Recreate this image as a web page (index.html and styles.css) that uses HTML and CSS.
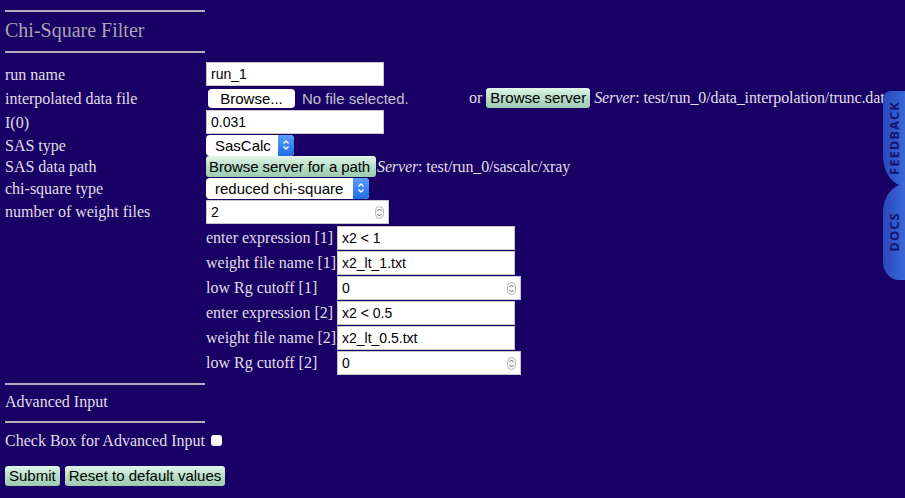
FILE: index.html
```html
<!DOCTYPE html>
<html>
<head>
<meta charset="utf-8">
<link rel="stylesheet" href="styles.css">
</head>
<body>
<div class="page">
  <div class="rule first"></div>
  <h1 class="title">Chi-Square Filter</h1>
  <div class="rule"></div>

  <div class="form">
    <div class="label r24">run name</div>
    <div class="field r24"><div class="text w177">run_1</div></div>

    <div class="label r24">interpolated data file</div>
    <div class="field r24 fileline">
      <span class="filebtn">Browse...</span>
      <span class="nofile">No file selected.</span>
      <span class="or">or</span>
      <span class="gbtn">Browse server</span>
      <span class="server"><i>Server</i>: test/run_0/data_interpolation/trunc.dat</span>
    </div>

    <div class="label r24">I(0)</div>
    <div class="field r24"><div class="text w177">0.031</div></div>

    <div class="label r22">SAS type</div>
    <div class="field r22">
      <div class="select w88"><span class="sv">SasCalc</span><span class="arrows"><svg width="8" height="12" viewBox="0 0 8 12"><path d="M1.5 4.5 L4 2 L6.5 4.5 M1.5 7.5 L4 10 L6.5 7.5" fill="none" stroke="#fff" stroke-width="1.3"/></svg></span></div>
    </div>

    <div class="label r21">SAS data path</div>
    <div class="field r21">
      <span class="gbtn path">Browse server for a path</span><span class="server"><i>Server</i>: test/run_0/sascalc/xray</span>
    </div>

    <div class="label r22">chi-square type</div>
    <div class="field r22">
      <div class="select w163"><span class="sv">reduced chi-square</span><span class="arrows"><svg width="8" height="12" viewBox="0 0 8 12"><path d="M1.5 4.5 L4 2 L6.5 4.5 M1.5 7.5 L4 10 L6.5 7.5" fill="none" stroke="#fff" stroke-width="1.3"/></svg></span></div>
    </div>

    <div class="label r25">number of weight files</div>
    <div class="field r25"><div class="text number w183">2<span class="spin"><svg width="9" height="13" viewBox="0 0 9 13"><rect x="0.5" y="0.5" width="8" height="12" rx="4" fill="#f4f4f4" stroke="#bbb"/><path d="M2.5 5 L4.5 3 L6.5 5 M2.5 8 L4.5 10 L6.5 8" fill="none" stroke="#666" stroke-width="0.9"/></svg></span></div></div>

    <div class="sub">
      <div class="slabel">enter expression [1]</div>
      <div class="sfield"><div class="text w177">x2 &lt; 1</div></div>
      <div class="slabel">weight file name [1]</div>
      <div class="sfield"><div class="text w177">x2_lt_1.txt</div></div>
      <div class="slabel">low Rg cutoff [1]</div>
      <div class="sfield"><div class="text number w184">0<span class="spin"><svg width="9" height="13" viewBox="0 0 9 13"><rect x="0.5" y="0.5" width="8" height="12" rx="4" fill="#f4f4f4" stroke="#bbb"/><path d="M2.5 5 L4.5 3 L6.5 5 M2.5 8 L4.5 10 L6.5 8" fill="none" stroke="#666" stroke-width="0.9"/></svg></span></div></div>
      <div class="slabel">enter expression [2]</div>
      <div class="sfield"><div class="text w177">x2 &lt; 0.5</div></div>
      <div class="slabel">weight file name [2]</div>
      <div class="sfield"><div class="text w177">x2_lt_0.5.txt</div></div>
      <div class="slabel">low Rg cutoff [2]</div>
      <div class="sfield"><div class="text number w184">0<span class="spin"><svg width="9" height="13" viewBox="0 0 9 13"><rect x="0.5" y="0.5" width="8" height="12" rx="4" fill="#f4f4f4" stroke="#bbb"/><path d="M2.5 5 L4.5 3 L6.5 5 M2.5 8 L4.5 10 L6.5 8" fill="none" stroke="#666" stroke-width="0.9"/></svg></span></div></div>
    </div>
  </div>

  <div class="rule adv"></div>
  <div class="advtitle">Advanced Input</div>
  <div class="rule"></div>
  <div class="checkline">Check Box for Advanced Input <span class="checkbox"></span></div>

  <div class="buttons">
    <span class="gbtn">Submit</span>
    <span class="gbtn">Reset to default values</span>
  </div>
</div>

<div class="tab feedback"><span>FEEDBACK</span></div>
<div class="tab docs"><span>DOCS</span></div>
</body>
</html>
```

FILE: styles.css
```css
*, *::before, *::after {
  box-sizing: border-box;
}
html, body {
  margin: 0;
  padding: 0;
  background: #180064;
  height: 100%;
  overflow: hidden;
}
.page {
  padding: 0 5px;
  font-family: "Liberation Serif", "Times New Roman", serif;
  font-size: 16px;
  color: #e2dee8;
}
.rule {
  width: 200px;
  height: 2px;
  background: #b4acbc;
}
.rule.first {
  margin-top: 10px;
}
.title {
  margin: 0;
  height: 39px;
  line-height: 37px;
  font-size: 20px;
  font-weight: normal;
  color: #aaa2b2;
}
.form {
  display: grid;
  grid-template-columns: 201px auto;
  margin-top: 9px;
}
.label {
  display: flex;
  align-items: center;
  white-space: nowrap;
  padding-top: 1px;
}
.field {
  display: flex;
  align-items: center;
  white-space: nowrap;
}
.r24 { height: 24px; }
.r22 { height: 22px; }
.r21 { height: 21px; }
.r25 { height: 25px; }
.text {
  height: 24px;
  background: #fff;
  border: 1px solid #c8c8c8;
  font-family: "Liberation Sans", Arial, sans-serif;
  font-size: 14px;
  color: #000;
  line-height: 22px;
  padding: 0 4px;
  position: relative;
}
.w177 { width: 178px; }
.w183 { width: 183px; }
.w184 { width: 184px; }
.spin {
  position: absolute;
  right: 4px;
  top: 5px;
  display: flex;
}
.fileline {
  font-family: "Liberation Sans", Arial, sans-serif;
  font-size: 15px;
}
.filebtn {
  margin-left: 2px;
  width: 87px;
  height: 19px;
  line-height: 19px;
  background: #fff;
  border-radius: 4px;
  color: #000;
  text-align: center;
}
.nofile {
  margin-left: 7px;
  color: #c4c0d0;
  width: 167px;
}
.or {
  font-family: "Liberation Serif", "Times New Roman", serif;
  font-size: 16px;
  color: #e2dee8;
  margin-right: 4px;
}
.gbtn {
  display: inline-block;
  height: 20px;
  line-height: 20px;
  padding: 0 4px;
  border-radius: 3px;
  background: linear-gradient(#e2f6ea, #b4dcc4 55%, #9ccbb0);
  color: #000;
  font-family: "Liberation Sans", Arial, sans-serif;
  font-size: 15px;
  white-space: nowrap;
}
.gbtn.path {
  width: 170px;
  height: 21px;
  line-height: 21px;
  padding: 0 3px;
  letter-spacing: -0.1px;
}
.server {
  margin-left: 4px;
  font-family: "Liberation Serif", "Times New Roman", serif;
  font-size: 16px;
  letter-spacing: -0.12px;
  color: #e2dee8;
}
.path + .server { margin-left: 1px; }
.select {
  height: 21px;
  background: #fff;
  border-radius: 4px;
  display: flex;
  align-items: center;
  justify-content: space-between;
  font-family: "Liberation Sans", Arial, sans-serif;
  font-size: 15px;
  color: #000;
  overflow: hidden;
}
.w88 { width: 88px; }
.w163 { width: 163px; }
.sv { padding-left: 9px; }
.arrows {
  width: 16px;
  height: 21px;
  background: linear-gradient(#5a9cf8, #1f6ee8);
  border-radius: 0 4px 4px 0;
  display: flex;
  align-items: center;
  justify-content: center;
}
.sub {
  grid-column: 2;
  display: grid;
  grid-template-columns: 131px auto;
  grid-auto-rows: 25px;
  align-items: center;
  margin-top: 1px;
}
.slabel {
  white-space: nowrap;
  padding-top: 1px;
}
.sfield {
  display: flex;
  align-items: center;
}
.rule.adv {
  margin-top: 8px;
}
.advtitle {
  height: 36px;
  line-height: 33px;
}
.checkline {
  margin-top: 6px;
  height: 23px;
  display: flex;
  align-items: center;
  white-space: nowrap;
}
.checkbox {
  display: inline-block;
  width: 11px;
  height: 11px;
  background: #fff;
  border-radius: 3px;
  margin-left: 6px;
}
.buttons {
  margin-top: 14px;
  display: flex;
  gap: 5px;
}
.tab {
  position: absolute;
  right: 0;
  width: 22px;
  background: linear-gradient(90deg, #2848bc, #3a68d8);
  display: flex;
  align-items: center;
  justify-content: center;
}
.tab span {
  transform: rotate(-90deg);
  white-space: nowrap;
  font-family: "Open Sans", "Liberation Sans", sans-serif;
  font-weight: bold;
  font-size: 13px;
  letter-spacing: 1px;
  color: #14146a;
}
.feedback {
  top: 91px;
  height: 95px;
  border-radius: 8px 0 0 22px / 8px 0 0 30px;
}
.feedback span { margin-top: -2px; }
.docs {
  top: 184px;
  height: 96px;
  border-radius: 22px 0 0 16px / 28px 0 0 18px;
}
```
